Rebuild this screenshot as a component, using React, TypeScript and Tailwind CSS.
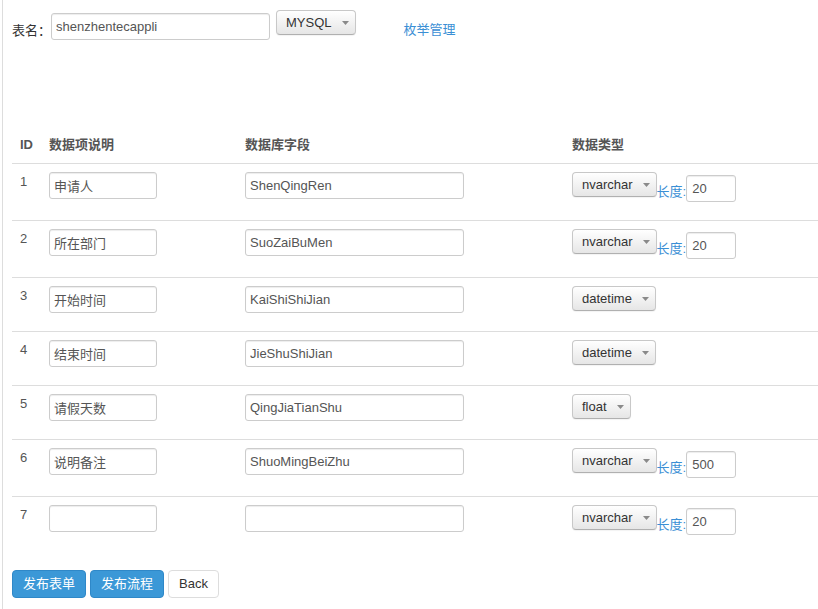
import React from "react";

type Field = {
  id: number;
  label: string;
  column: string;
  type: string;
  length?: string;
};

const fields: Field[] = [
  { id: 1, label: "申请人", column: "ShenQingRen", type: "nvarchar", length: "20" },
  { id: 2, label: "所在部门", column: "SuoZaiBuMen", type: "nvarchar", length: "20" },
  { id: 3, label: "开始时间", column: "KaiShiShiJian", type: "datetime" },
  { id: 4, label: "结束时间", column: "JieShuShiJian", type: "datetime" },
  { id: 5, label: "请假天数", column: "QingJiaTianShu", type: "float" },
  { id: 6, label: "说明备注", column: "ShuoMingBeiZhu", type: "nvarchar", length: "500" },
  { id: 7, label: "", column: "", type: "nvarchar", length: "20" },
];

const inputCls =
  "block h-[27px] rounded-[3px] border border-[#ccc] bg-white pl-[4px] text-[13px] text-[#555] shadow-[inset_0_1px_1px_rgba(0,0,0,0.075)] outline-none";

function Caret() {
  return (
    <svg width="7" height="4" viewBox="0 0 7 4" className="shrink-0">
      <polygon points="0,0 7,0 3.5,4" fill="#8a8a8a" />
    </svg>
  );
}

function DropButton({ value }: { value: string }) {
  return (
    <button className="flex h-[25px] shrink-0 items-center rounded-[4px] border border-[#c8c8c8] border-b-[#b0b0b0] bg-linear-to-b from-white to-[#e6e6e6] pl-[9px] pr-[6px] text-[13px] leading-none text-[#333] shadow-[0_1px_1px_rgba(0,0,0,0.05)]">
      <span>{value}</span>
      <span className="ml-[10px] flex items-center">
        <Caret />
      </span>
    </button>
  );
}

export default function App() {
  return (
    <div className="h-[609px] w-[818px] overflow-hidden bg-white font-['Liberation_Sans','Noto_Sans_CJK_SC',sans-serif] text-[13px] text-[#333]">
      <div className="ml-[2px] h-full border-l border-[#ddd] pl-[9px]">
        {/* Table name bar */}
        <div className="flex h-[127px] items-start">
          <span className="mt-[21px] leading-[20px] text-[#333]">表名：</span>
          <input className={`${inputCls} mt-[13px] w-[219px]`} defaultValue="shenzhentecappli" />
          <div className="ml-[6px] mt-[10px]">
            <DropButton value="MYSQL" />
          </div>
          <a className="ml-[48px] mt-[20px] leading-[20px] text-[#3b8fd5]">枚举管理</a>
        </div>

        {/* Field table */}
        <table className="w-[830px] table-fixed border-separate border-spacing-0">
          <colgroup>
            <col className="w-[29px]" />
            <col className="w-[196px]" />
            <col className="w-[327px]" />
            <col />
          </colgroup>
          <thead>
            <tr className="text-left font-bold leading-[20px] text-[#555]">
              <th className="p-2">ID</th>
              <th className="p-2">数据项说明</th>
              <th className="p-2">数据库字段</th>
              <th className="p-2">数据类型</th>
            </tr>
          </thead>
          <tbody>
            {fields.map((f) => (
              <tr key={f.id} className="align-top">
                <td className="border-t border-[#ddd] px-2 pb-2 pt-2 leading-[20px] text-[#555]">{f.id}</td>
                <td className="border-t border-[#ddd] px-2 pb-2 pt-2">
                  <input className={`${inputCls} mb-[10px] w-[108px]`} defaultValue={f.label} />
                </td>
                <td className="border-t border-[#ddd] px-2 pb-2 pt-2">
                  <input className={`${inputCls} mb-[10px] w-[219px]`} defaultValue={f.column} />
                </td>
                <td className="border-t border-[#ddd] px-2 pb-2 pt-2">
                  <div className="flex items-start">
                    <DropButton value={f.type} />
                    {f.length && (
                      <>
                        <span className="mt-[13px] leading-[14px] text-[#3b8fd5]">长度:</span>
                        <input className={`${inputCls} mb-[10px] mt-[3px] w-[50px] pl-[5px]`} defaultValue={f.length} />
                      </>
                    )}
                  </div>
                </td>
              </tr>
            ))}
          </tbody>
        </table>

        {/* Actions */}
        <div className="mt-[17px] flex gap-[4px]">
          <button className="h-[28px] rounded-[4px] border border-[#2f88c8] bg-[#3b98d7] px-[10px] text-[13px] text-white">发布表单</button>
          <button className="h-[28px] rounded-[4px] border border-[#2f88c8] bg-[#3b98d7] px-[10px] text-[13px] text-white">发布流程</button>
          <button className="h-[28px] rounded-[4px] border border-[#ddd] bg-white px-[10px] text-[13px] text-[#333]">Back</button>
        </div>
      </div>
    </div>
  );
}
